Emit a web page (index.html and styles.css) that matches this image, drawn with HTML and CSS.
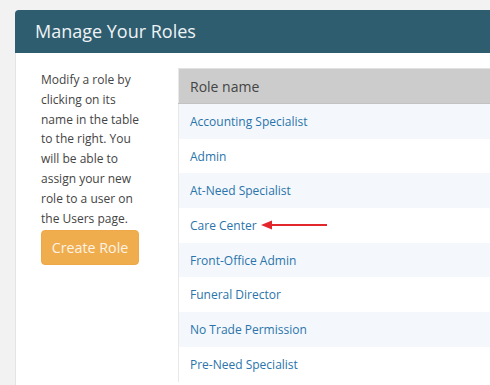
FILE: index.html
```html
<!DOCTYPE html>
<html lang="en">
<head>
<meta charset="utf-8">
<title>Manage Your Roles</title>
<link rel="stylesheet" href="styles.css">
</head>
<body>
<div class="panel">
  <div class="panel-heading">Manage Your Roles</div>
  <div class="panel-body">
    <div class="intro">
      <p>Modify a role by clicking on its name in the table to the right. You will be able to assign your new role to a user on the Users page.</p>
      <button class="btn-create" type="button">Create Role</button>
    </div>
    <div class="table-wrap">
      <table class="roles">
        <thead>
          <tr><th>Role name</th></tr>
        </thead>
        <tbody>
          <tr><td><a href="#">Accounting Specialist</a></td></tr>
          <tr><td><a href="#">Admin</a></td></tr>
          <tr><td><a href="#">At-Need Specialist</a></td></tr>
          <tr><td><span class="marked"><a href="#">Care Center</a><svg class="arrow" width="66" height="10" viewBox="0 0 66 10"><line x1="8" y1="5" x2="66" y2="5" stroke="#e3262b" stroke-width="2"/><polygon points="0,5 11,0.5 11,9.5" fill="#e3262b"/></svg></span></td></tr>
          <tr><td><a href="#">Front-Office Admin</a></td></tr>
          <tr><td><a href="#">Funeral Director</a></td></tr>
          <tr><td><a href="#">No Trade Permission</a></td></tr>
          <tr><td><a href="#">Pre-Need Specialist</a></td></tr>
        </tbody>
      </table>
    </div>
  </div>
</div>
</body>
</html>
```
FILE: styles.css
```css
html, body {
  margin: 0;
  padding: 0;
  overflow: hidden;
}
body {
  background: #f2f2f2;
  font-family: "Open Sans", "Noto Sans", sans-serif;
  color: #444;
  padding: 10px 0 0 15px;
}
.panel {
  width: 560px;
  background: #fff;
  border: 1px solid #e4e4e4;
  border-top: 0;
  border-radius: 4px 4px 0 0;
  min-height: 400px;
}
.panel-heading {
  background: #2f5d70;
  color: #eef3f5;
  font-size: 18px;
  height: 43px;
  line-height: 43px;
  padding-left: 20px;
  border-radius: 4px 4px 0 0;
  margin: 0 -1px;
}
.panel-body {
  display: flex;
  padding: 15px 0 0 25px;
}
.intro {
  width: 104px;
  flex: none;
  margin-right: 33px;
  padding-top: 2px;
}
.intro p {
  margin: 0 0 2px;
  font-size: 12px;
  line-height: 19.8px;
  color: #444;
}
.btn-create {
  display: block;
  width: 98px;
  height: 35px;
  padding: 0;
  background: #f0ad4e;
  border: 1px solid #eea847;
  border-radius: 4px;
  color: #fdf3e4;
  font-family: "Open Sans", "Noto Sans", sans-serif;
  font-size: 14.3px;
}
.table-wrap {
  flex: 1;
}
.roles {
  width: 100%;
  border-collapse: collapse;
  border-left: 1px solid #e8e8e8;
  border-top: 1px solid #e2e2e2;
}
.roles th {
  background: #cccccc;
  color: #444;
  font-weight: normal;
  font-size: 14px;
  text-align: left;
  height: 35px;
  padding: 0 11px;
  border-bottom: 1px solid #c2c2c2;
  box-sizing: border-box;
}
.roles td {
  height: 34.7px;
  padding: 0 11px;
  font-size: 12px;
}
.roles tbody tr:nth-child(odd) td {
  background: #f4f8fc;
}
.roles a {
  color: #2a74ab;
  text-decoration: none;
}
.marked {
  display: inline-flex;
  align-items: center;
  gap: 4px;
}
.arrow {
  display: block;
}
```
